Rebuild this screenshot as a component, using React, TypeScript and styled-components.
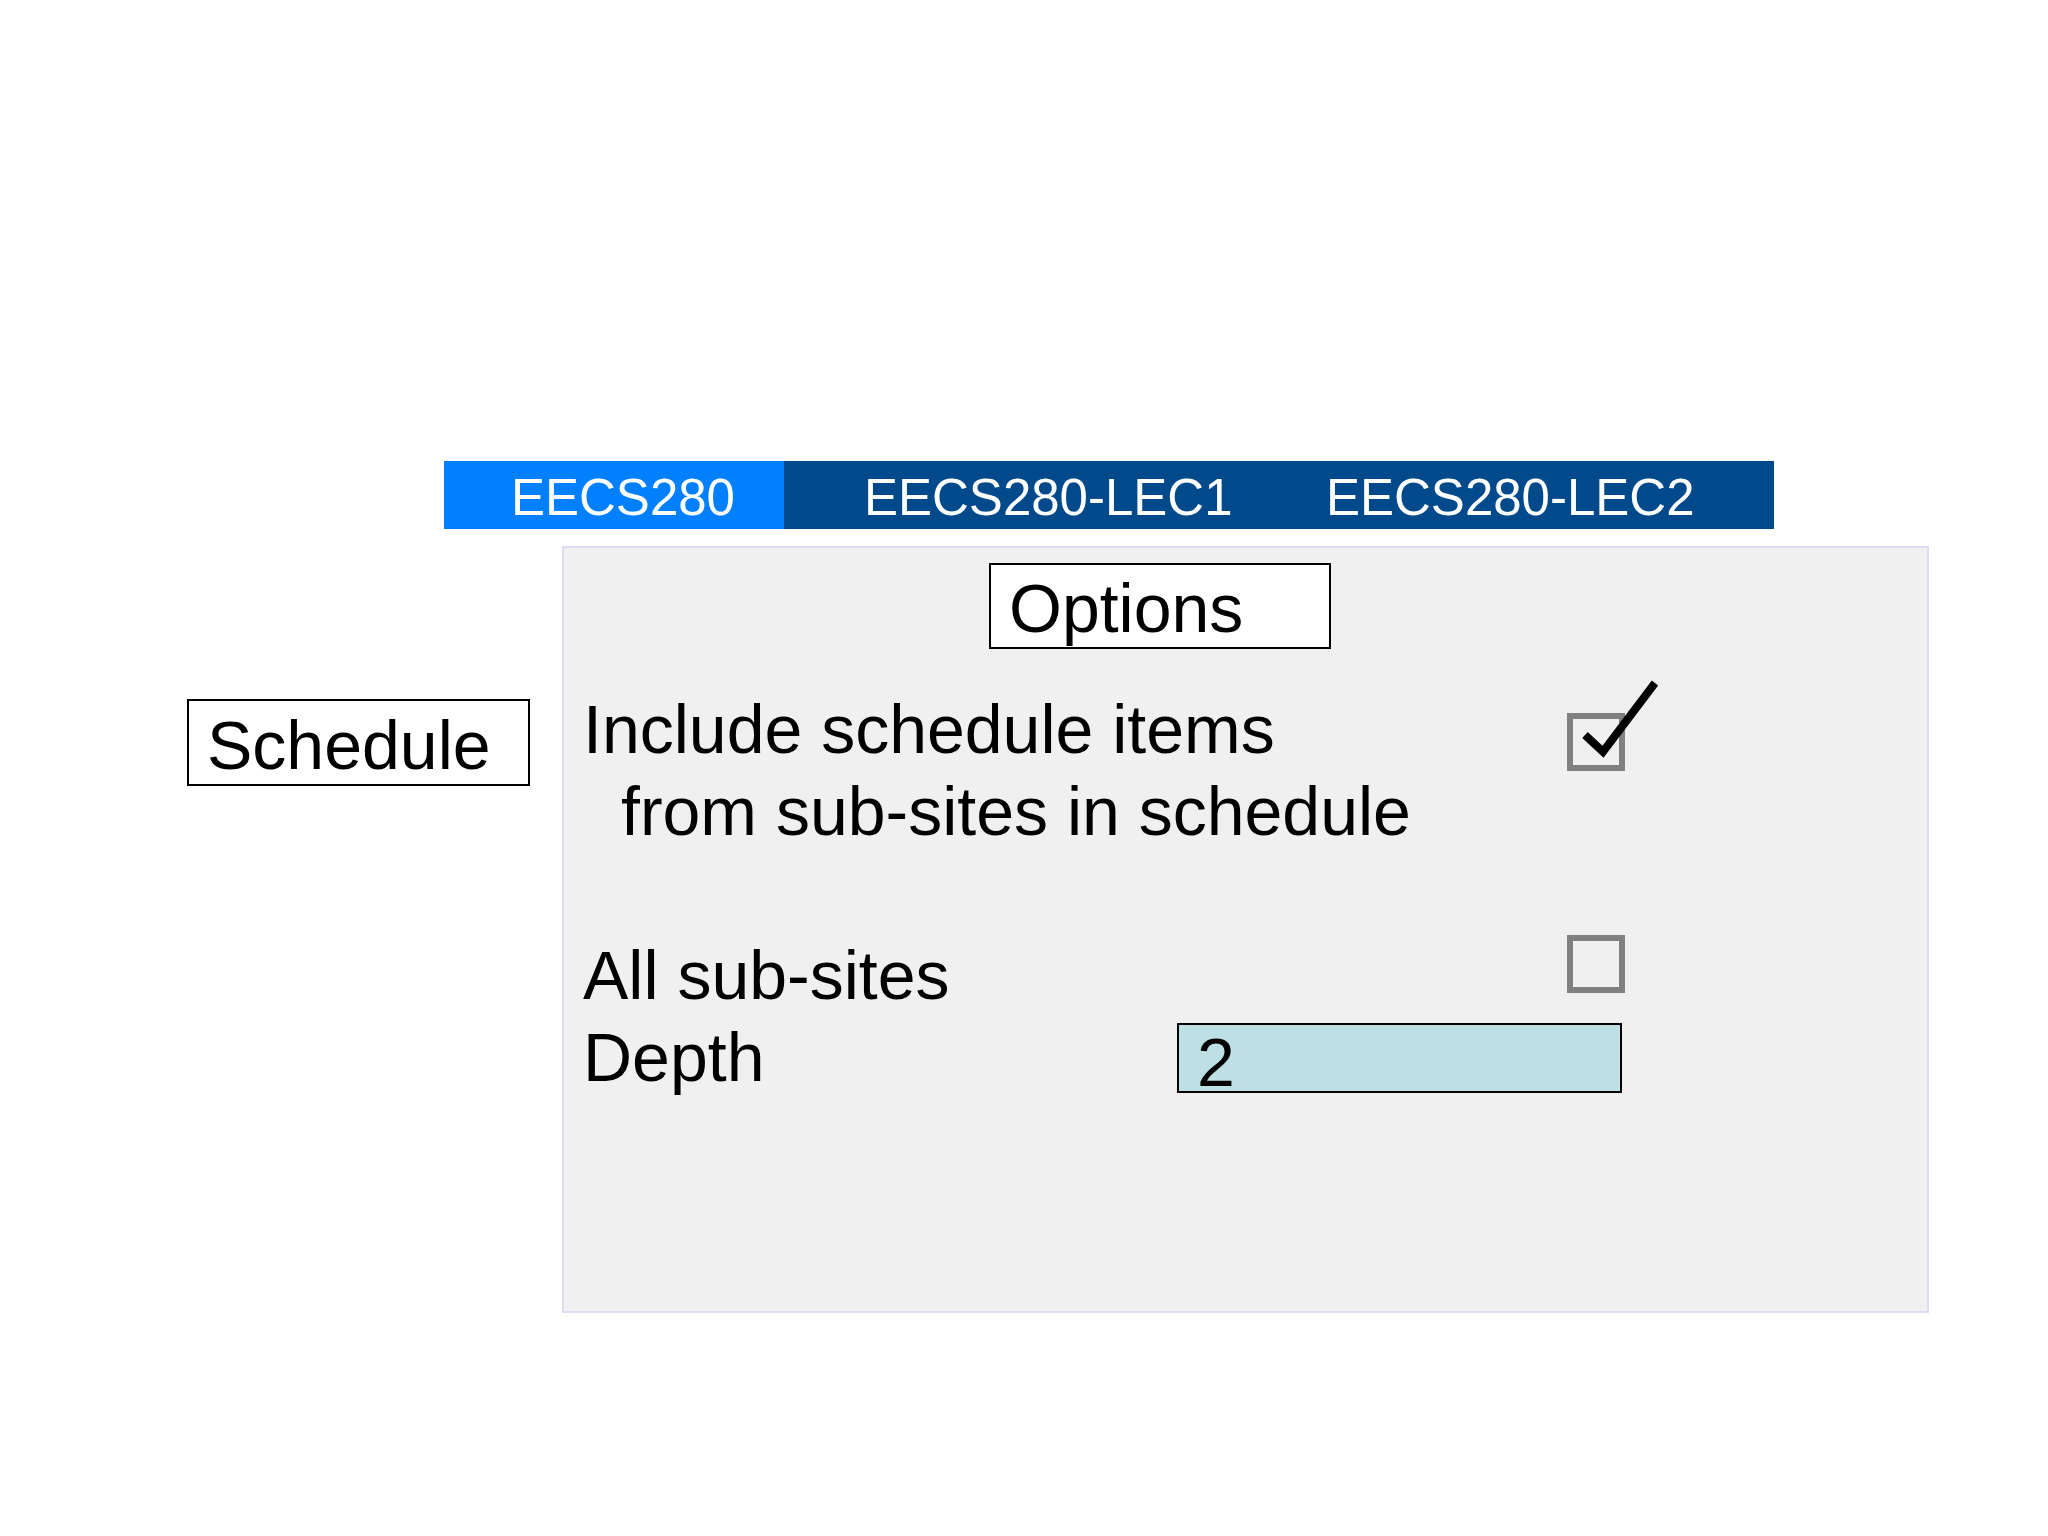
import React from 'react';
import styled, { createGlobalStyle } from 'styled-components';

const GlobalStyle = createGlobalStyle`
  html, body {
    margin: 0;
    padding: 0;
    background: #ffffff;
  }

  body {
    font-family: "Liberation Sans", Arial, Helvetica, sans-serif;
    color: #000000;
  }

  * {
    box-sizing: border-box;
  }
`;

const Page = styled.div`
  min-height: 1536px;
  padding-top: 461px;
`;

const TabBar = styled.nav`
  display: flex;
  width: 1330px;
  height: 68px;
  margin-left: 444px;
  background: #004a8c;
`;

const Tab = styled.div<{ $active?: boolean; $width?: number; $indent: number }>`
  flex: ${(p) => (p.$width ? `0 0 ${p.$width}px` : '1 1 auto')};
  height: 68px;
  padding-top: 3px;
  padding-left: ${(p) => p.$indent}px;
  background: ${(p) => (p.$active ? '#0080ff' : '#004a8c')};
  color: #ffffff;
  font-size: 51px;
  line-height: 68px;
  white-space: nowrap;
`;

const Body = styled.div`
  display: flex;
  align-items: flex-start;
  gap: 32px;
  margin-top: 17px;
  padding-left: 187px;
`;

const SideLabel = styled.div`
  width: 343px;
  height: 87px;
  margin-top: 153px;
  padding: 3px 0 0 18px;
  border: 2px solid #000000;
  background: #ffffff;
  font-size: 68px;
  line-height: 82px;
`;

const Panel = styled.section`
  display: flex;
  flex-direction: column;
  width: 1367px;
  height: 767px;
  padding: 15px 0 0 19px;
  border: 2px solid #dcdcf2;
  background: #f0f0f0;
`;

const HeaderBox = styled.div`
  width: 342px;
  height: 86px;
  margin-left: 406px;
  padding: 2px 0 0 18px;
  border: 2px solid #000000;
  background: #ffffff;
  font-size: 68px;
  line-height: 82px;
`;

const OptionRow = styled.div<{ $gap: number }>`
  display: flex;
  justify-content: space-between;
  align-items: flex-start;
  width: 1042px;
  margin-top: ${(p) => p.$gap}px;
`;

const Label = styled.div`
  font-size: 68px;
  line-height: 82px;
  white-space: nowrap;
`;

const Line = styled.div<{ $indent?: number }>`
  padding-left: ${(p) => p.$indent ?? 0}px;
`;

const Checkbox = styled.div<{ $offset: number }>`
  position: relative;
  flex: 0 0 58px;
  width: 58px;
  height: 58px;
  margin-top: ${(p) => p.$offset}px;
  border: 6px solid #808080;
`;

const Tick = styled.svg`
  position: absolute;
  left: -6px;
  top: -52px;
  overflow: visible;
`;

const DepthField = styled.div`
  width: 445px;
  height: 70px;
  margin-top: 7px;
  margin-right: 3px;
  padding: 4px 0 0 18px;
  border: 2px solid #000000;
  background: #bde0e4;
  font-size: 68px;
  line-height: 66px;
`;

const tabs = [
  { label: 'EECS280', width: 340, indent: 67, active: true },
  { label: 'EECS280-LEC1', width: 471, indent: 80 },
  { label: 'EECS280-LEC2', indent: 71 },
];

export default function App() {
  return (
    <Page>
      <GlobalStyle />
      <TabBar>
        {tabs.map((t) => (
          <Tab key={t.label} $active={t.active} $width={t.width} $indent={t.indent}>
            {t.label}
          </Tab>
        ))}
      </TabBar>

      <Body>
        <SideLabel>Schedule</SideLabel>

        <Panel>
          <HeaderBox>Options</HeaderBox>

          <OptionRow $gap={39}>
            <Label>
              <Line>Include schedule items</Line>
              <Line $indent={38}>from sub-sites in schedule</Line>
            </Label>
            <Checkbox $offset={25}>
              <Tick width="100" height="100" viewBox="0 0 100 100">
                <polyline
                  points="18,68 36,84.7 88,16"
                  fill="none"
                  stroke="#000000"
                  strokeWidth="8"
                  strokeLinejoin="miter"
                />
              </Tick>
            </Checkbox>
          </OptionRow>

          <OptionRow $gap={82}>
            <Label>All sub-sites</Label>
            <Checkbox $offset={1} />
          </OptionRow>

          <OptionRow $gap={0}>
            <Label>Depth</Label>
            <DepthField>2</DepthField>
          </OptionRow>
        </Panel>
      </Body>
    </Page>
  );
}
